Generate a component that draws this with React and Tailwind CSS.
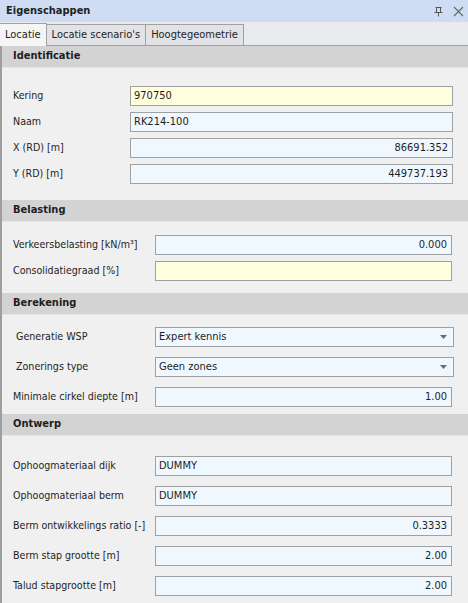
import { useState } from "react";

const font = { fontFamily: '"DejaVu Sans Condensed", "DejaVu Sans", sans-serif' };

const SectionHeader = ({ title }) => (
  <div className="h-[22px] bg-[#d3d3d3] flex items-center pl-[11px] border-b border-[#e6e6e6] text-[11px] font-bold text-[#1e1e1e]">
    {title}
  </div>
);

const Field = ({ value, align = "left", bg = "bg-[#f0f8ff]", right = 15 }) => (
  <div
    className={`h-[20px] flex-1 border border-[#a0a0a0] ${bg} flex items-center px-[3px] text-[11px] text-[#1e1e1e] ${
      align === "right" ? "justify-end pr-[4px]" : ""
    }`}
    style={{ marginRight: right }}
  >
    {value}
  </div>
);

const Dropdown = ({ value }) => (
  <div className="h-[20px] flex-1 mr-[14px] border border-[#a0a0a0] bg-[#f0f8ff] flex items-center justify-between pl-[3px] pr-[6px] text-[11px] text-[#1e1e1e]">
    <span>{value}</span>
    <svg width="7" height="4" viewBox="0 0 7 4">
      <path d="M0 0h7L3.5 4z" fill="#6b6b6b" />
    </svg>
  </div>
);

const Row = ({ label, labelW, indent = 11, h, children }) => (
  <div className="flex items-center" style={{ height: h }}>
    <div className="text-[10.6px] text-[#1e1e1e] shrink-0" style={{ width: labelW, paddingLeft: indent }}>
      {label}
    </div>
    {children}
  </div>
);

export default function App() {
  const [tab, setTab] = useState(0);
  const tabs = ["Locatie", "Locatie scenario's", "Hoogtegeometrie"];

  return (
    <div className="w-[468px] h-[603px] overflow-hidden bg-[#f0f0f0] flex flex-col" style={font}>
      <div className="h-[22px] bg-[#cfddf4] flex items-center justify-between pl-[6px] pr-[4px] shrink-0">
        <span className="text-[11px] font-bold text-[#1e1e1e]">Eigenschappen</span>
        <div className="flex items-center gap-[9px]">
          <svg width="11" height="11" viewBox="0 0 11 11" stroke="#555" fill="none" strokeWidth="1">
            <path d="M2.5 1.5h6M3.5 1.5v5M7.5 1.5v5M1.5 6.5h8M5.5 6.5v4" />
          </svg>
          <svg width="11" height="11" viewBox="0 0 11 11" stroke="#666" strokeWidth="1.1">
            <path d="M1 1l9 9M10 1l-9 9" />
          </svg>
        </div>
      </div>

      <div className="h-[24px] bg-[#eaebee] flex items-end border-b border-[#a0a0a0] shrink-0">
        {tabs.map((t, i) => (
          <button
            key={t}
            onClick={() => setTab(i)}
            className={`border-r border-[#a0a0a0] text-[11px] text-[#1e1e1e] flex items-center ${
              tab === i
                ? "h-[23px] bg-[#f5f5f5] border-t px-[5px] -mb-px"
                : "h-[21px] bg-[#e2e3e6] border-t px-[5px]"
            }`}
          >
            {t}
          </button>
        ))}
      </div>

      <div className="flex-1 border-l-2 border-[#9e9e9e] flex flex-col">
        <SectionHeader title="Identificatie" />
        <div className="pt-[15px] pb-[13px]">
          <Row label="Kering" labelW={128} h={26}>
            <Field value="970750" bg="bg-[#ffffe0]" />
          </Row>
          <Row label="Naam" labelW={128} h={26}>
            <Field value="RK214-100" />
          </Row>
          <Row label="X (RD) [m]" labelW={128} h={26}>
            <Field value="86691.352" align="right" />
          </Row>
          <Row label="Y (RD) [m]" labelW={128} h={26}>
            <Field value="449737.193" align="right" />
          </Row>
        </div>

        <SectionHeader title="Belasting" />
        <div className="pt-[10px] pb-[9px]">
          <Row label="Verkeersbelasting [kN/m³]" labelW={153} h={26}>
            <Field value="0.000" align="right" right={16} />
          </Row>
          <Row label="Consolidatiegraad [%]" labelW={153} h={26}>
            <Field value="" bg="bg-[#ffffe0]" right={16} />
          </Row>
        </div>

        <SectionHeader title="Berekening" />
        <div className="pt-[7px] pb-[2px]">
          <Row label="Generatie WSP" labelW={153} indent={14} h={30}>
            <Dropdown value="Expert kennis" />
          </Row>
          <Row label="Zonerings type" labelW={153} indent={14} h={30}>
            <Dropdown value="Geen zones" />
          </Row>
          <Row label="Minimale cirkel diepte [m]" labelW={153} h={30}>
            <Field value="1.00" align="right" right={16} />
          </Row>
        </div>

        <SectionHeader title="Ontwerp" />
        <div className="pt-[15px]">
          <Row label="Ophoogmateriaal dijk" labelW={153} h={30}>
            <Field value="DUMMY" right={16} />
          </Row>
          <Row label="Ophoogmateriaal berm" labelW={153} h={30}>
            <Field value="DUMMY" right={16} />
          </Row>
          <Row label="Berm ontwikkelings ratio [-]" labelW={153} h={30}>
            <Field value="0.3333" align="right" right={16} />
          </Row>
          <Row label="Berm stap grootte [m]" labelW={153} h={30}>
            <Field value="2.00" align="right" right={16} />
          </Row>
          <Row label="Talud stapgrootte [m]" labelW={153} h={30}>
            <Field value="2.00" align="right" right={16} />
          </Row>
        </div>
      </div>
    </div>
  );
}
